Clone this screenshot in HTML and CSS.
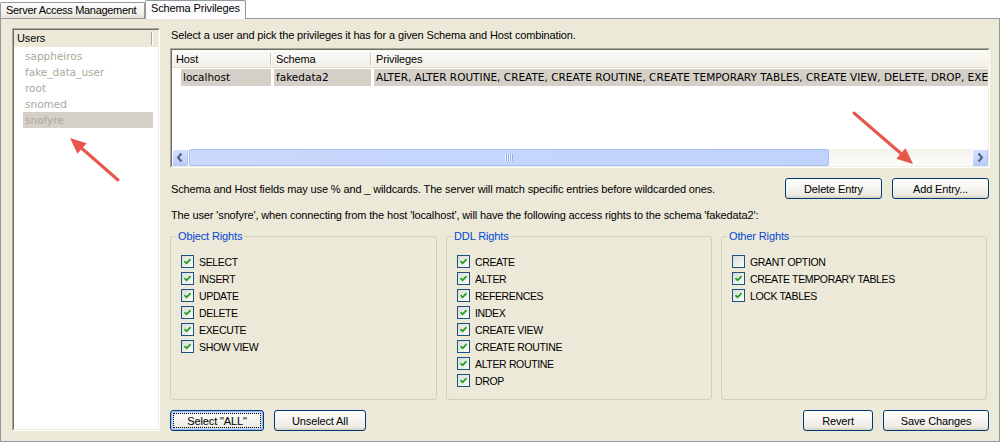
FILE: index.html
```html
<!DOCTYPE html>
<html>
<head>
<meta charset="utf-8">
<link rel="stylesheet" href="styles.css">
</head>
<body>
<div class="app">
  <div class="tabs">
    <div class="tab">Server Access Management</div>
    <div class="tab active">Schema Privileges</div>
  </div>
  <div class="panel">
    <div class="users">
      <div class="users-in">
        <div class="users-head"><span>Users</span><i class="hsep"></i></div>
        <ul class="user-list">
          <li>sappheiros</li>
          <li>fake_data_user</li>
          <li>root</li>
          <li>snomed</li>
          <li class="sel">snofyre</li>
        </ul>
      </div>
    </div>
    <div class="main">
      <p class="line intro">Select a user and pick the privileges it has for a given Schema and Host combination.</p>
      <div class="grid">
        <div class="grid-in">
          <div class="grid-head">
            <div class="hcol c1">Host</div><i class="hsep"></i>
            <div class="hcol c2">Schema</div><i class="hsep"></i>
            <div class="hcol c3">Privileges</div>
          </div>
          <div class="grid-row">
            <div class="cell k1">localhost</div>
            <div class="cell k2">fakedata2</div>
            <div class="cell k3">ALTER, ALTER ROUTINE, CREATE, CREATE ROUTINE, CREATE TEMPORARY TABLES, CREATE VIEW, DELETE, DROP, EXECUTE, INDEX, INSERT, LOCK TABLES</div>
          </div>
          <div class="grid-fill"></div>
          <div class="hscroll">
            <div class="sbtn"><svg width="16" height="17" viewBox="0 0 16 17"><path d="M9.5 4.5 L6 8.5 L9.5 12.5" fill="none" stroke="#4d6185" stroke-width="2"/></svg></div>
            <div class="thumb"><span class="grip"></span></div>
            <div class="track"></div>
            <div class="sbtn"><svg width="16" height="17" viewBox="0 0 16 17"><path d="M6.5 4.5 L10 8.5 L6.5 12.5" fill="none" stroke="#4d6185" stroke-width="2"/></svg></div>
          </div>
        </div>
      </div>
      <div class="row-wild">
        <p class="line">Schema and Host fields may use % and _ wildcards. The server will match specific entries before wildcarded ones.</p>
        <div class="btns">
          <button class="btn w96">Delete Entry</button>
          <button class="btn w96">Add Entry...</button>
        </div>
      </div>
      <p class="line access">The user 'snofyre', when connecting from the host 'localhost', will have the following access rights to the schema 'fakedata2':</p>
      <div class="groups">
        <fieldset>
          <legend>Object Rights</legend>
          <div class="checks">
            <label class="chk"><span class="box on"></span>SELECT</label>
            <label class="chk"><span class="box on"></span>INSERT</label>
            <label class="chk"><span class="box on"></span>UPDATE</label>
            <label class="chk"><span class="box on"></span>DELETE</label>
            <label class="chk"><span class="box on"></span>EXECUTE</label>
            <label class="chk"><span class="box on"></span>SHOW VIEW</label>
          </div>
        </fieldset>
        <fieldset>
          <legend>DDL Rights</legend>
          <div class="checks">
            <label class="chk"><span class="box on"></span>CREATE</label>
            <label class="chk"><span class="box on"></span>ALTER</label>
            <label class="chk"><span class="box on"></span>REFERENCES</label>
            <label class="chk"><span class="box on"></span>INDEX</label>
            <label class="chk"><span class="box on"></span>CREATE VIEW</label>
            <label class="chk"><span class="box on"></span>CREATE ROUTINE</label>
            <label class="chk"><span class="box on"></span>ALTER ROUTINE</label>
            <label class="chk"><span class="box on"></span>DROP</label>
          </div>
        </fieldset>
        <fieldset>
          <legend>Other Rights</legend>
          <div class="checks">
            <label class="chk"><span class="box"></span>GRANT OPTION</label>
            <label class="chk"><span class="box on"></span>CREATE TEMPORARY TABLES</label>
            <label class="chk"><span class="box on"></span>LOCK TABLES</label>
          </div>
        </fieldset>
      </div>
      <div class="footer">
        <button class="btn default w93">Select "ALL"</button>
        <button class="btn w92">Unselect All</button>
        <button class="btn w69 push">Revert</button>
        <button class="btn w105">Save Changes</button>
      </div>
    </div>
  </div>
  <svg class="annot" width="1003" height="444" viewBox="0 0 1003 444">
    <line x1="118" y1="180" x2="82" y2="148.5" stroke="#e8554b" stroke-width="3" stroke-linecap="round"/>
    <polygon points="70,138 86.6,143.2 77.4,153.8" fill="#e8554b"/>
    <line x1="854" y1="113" x2="901" y2="153.5" stroke="#e8554b" stroke-width="3" stroke-linecap="round"/>
    <polygon points="913,164 896.3,158.8 905.5,148.2" fill="#e8554b"/>
  </svg>
</div>
</body>
</html>
```

FILE: styles.css
```css
* { box-sizing: border-box; }
html, body { margin: 0; padding: 0; background: #fff; }
body { width: 1003px; height: 444px; overflow: hidden; font-family: "Liberation Sans", Arial, sans-serif; font-size: 11px; letter-spacing: -0.13px; color: #000; }

.app { position: relative; width: 1003px; height: 444px; }

.tabs { display: flex; height: 18px; align-items: flex-start; position: relative; z-index: 2; }
.tab {
  width: 145px; height: 16px; margin-top: 2px;
  border: 1px solid #919b9c; border-bottom: none; border-radius: 2px 2px 0 0;
  padding-left: 5px; line-height: 15px; white-space: nowrap; letter-spacing: -0.3px;
  background: linear-gradient(#ffffff, #f1f0ea 60%, #e6e4da);
}
.tab.active { width: 101px; height: 19px; margin-top: 0; background: #fcfcfe; line-height: 14px; letter-spacing: -0.13px; }

.panel {
  position: relative; z-index: 1;
  width: 1000px; height: 424px;
  border: 1px solid #919b9c;
  background: #ece9d8;
  display: flex; gap: 10px;
  padding: 9px 9px 0 11px;
}

.users { width: 148px; height: 403px; border: 1px solid; border-color: #aca899 #fff #fff #aca899; }
.users-in { height: 100%; border: 1px solid; border-color: #716f64 #f1efe2 #f1efe2 #716f64; background: #fff; }
.users-head { position: relative; height: 17px; background: #ece9d8; padding-left: 3px; line-height: 17px; }
.users-head .hsep { position: absolute; left: 137px; top: 2px; height: 13px; border-left: 1px solid #aca899; border-right: 1px solid #fff; }
.user-list { list-style: none; margin: 0; padding: 1px 0 0 0; font-family: "DejaVu Sans", Verdana, sans-serif; font-size: 10.5px; letter-spacing: 0; color: #aca899; }
.user-list li { height: 16px; line-height: 16px; margin-left: 9px; width: 130px; padding-left: 2px; }
.user-list li.sel { background: #d4d0c8; }

.main { width: 820px; display: flex; flex-direction: column; }
.line { margin: 0; line-height: 14px; padding-left: 1px; white-space: nowrap; }
.intro { margin-bottom: 6px; }

.grid { height: 120px; border: 1px solid; border-color: #aca899 #fff #fff #aca899; }
.grid-in { height: 100%; border: 1px solid; border-color: #716f64 #f1efe2 #f1efe2 #716f64; background: #fff; display: flex; flex-direction: column; }
.grid-head { height: 18px; display: flex; align-items: center; background: linear-gradient(#fbfbf8, #f1efe6); border-bottom: 1px solid #e2e0d3; flex: none; }
.grid-head .hsep { height: 12px; border-left: 1px solid #c7c5b2; border-right: 1px solid #fff; }
.hcol { padding-left: 4px; }
.hcol.c1 { width: 98px; }
.hcol.c2 { width: 98px; }
.hcol.c3 { flex: 1; }
.grid-row { display: flex; height: 17px; margin-top: 1px; font-family: "DejaVu Sans", Verdana, sans-serif; font-size: 10.5px; letter-spacing: 0; line-height: 17px; flex: none; }
.cell { background: #d4d0c8; padding-left: 2px; white-space: nowrap; overflow: hidden; }
.k1 { margin-left: 9px; width: 90px; }
.k2 { margin-left: 3px; width: 97px; }
.k3 { margin-left: 3px; flex: 1; }
.grid-fill { flex: 1; }

.hscroll { height: 17px; display: flex; background: #fbfbf8; flex: none; }
.sbtn { width: 16px; height: 17px; border: 1px solid #fff; border-right-color: #b1c5f4; border-bottom-color: #b1c5f4; background: linear-gradient(#d3e0fd, #bccefa); border-radius: 2px; }
.sbtn svg { display: block; margin: -1px; }
.thumb { width: 640px; height: 17px; margin-left: 1px; border: 1px solid #a8bff3; border-radius: 2px; background: linear-gradient(90deg, #c9d8fc, #c0d3fc); display: flex; align-items: center; justify-content: center; }
.grip { width: 8px; height: 7px; background: repeating-linear-gradient(90deg, #eef4fe 0 1px, #8eadf0 1px 2px); }
.track { flex: 1; background: linear-gradient(#f3f1ea, #fdfdfb); }

.row-wild { display: flex; align-items: center; height: 21px; margin-top: 10px; }
.btns { margin-left: auto; margin-right: 1px; display: flex; gap: 10px; }

.btn {
  height: 21px; padding: 0;
  font-family: "Liberation Sans", Arial, sans-serif; font-size: 11px; letter-spacing: -0.13px; color: #000;
  border: 1px solid #003c74; border-radius: 3px;
  background: linear-gradient(#ffffff, #f4f3ee 50%, #ecebe4 85%, #d8d4c8);
  box-shadow: inset 0 -1px 0 #d6d0c5;
}
.btn.default { box-shadow: inset 0 0 0 1px #9bb7ef, inset 0 0 0 2px #c8d8fb; outline: 1px dotted #000; outline-offset: -4px; }
.w96 { width: 97px; }
.w93 { width: 94px; }
.w92 { width: 92px; margin-left: 10px; }
.w69 { width: 70px; }
.w105 { width: 106px; margin-left: 10px; margin-right: 1px; }
.push { margin-left: auto; }

.access { margin-top: 9px; }

.groups { display: grid; grid-template-columns: 267px 266px 266px; column-gap: 9px; height: 170px; margin-top: 8px; width: 818px; }
fieldset { margin: 0; padding: 0; min-width: 0; border: 1px solid #d0d0bf; border-radius: 3px; }
legend { margin-left: 5px; padding: 0 2px; color: #0046d5; line-height: 13px; }
.checks { padding: 10px 0 0 10px; }
.chk { display: flex; align-items: center; height: 17px; white-space: nowrap; font-size: 10.5px; letter-spacing: -0.35px; }
.box { width: 13px; height: 13px; flex: none; margin-right: 5px; border: 1px solid #1c5180; background: linear-gradient(135deg, #dcdcd7, #fbfbf8); position: relative; }
.box.on::after {
  content: ""; position: absolute; left: 2px; top: 2px; width: 7px; height: 7px;
  background: no-repeat center / 7px 7px url("data:image/svg+xml;utf8,<svg xmlns='http://www.w3.org/2000/svg' viewBox='0 0 7 7'><path d='M0.5 3.2 L2.6 5.3 L6.5 1.2' fill='none' stroke='%2321a121' stroke-width='1.8'/></svg>");
}

.footer { display: flex; margin-top: 10px; }

.annot { position: absolute; left: 0; top: 0; pointer-events: none; z-index: 5; }
```
